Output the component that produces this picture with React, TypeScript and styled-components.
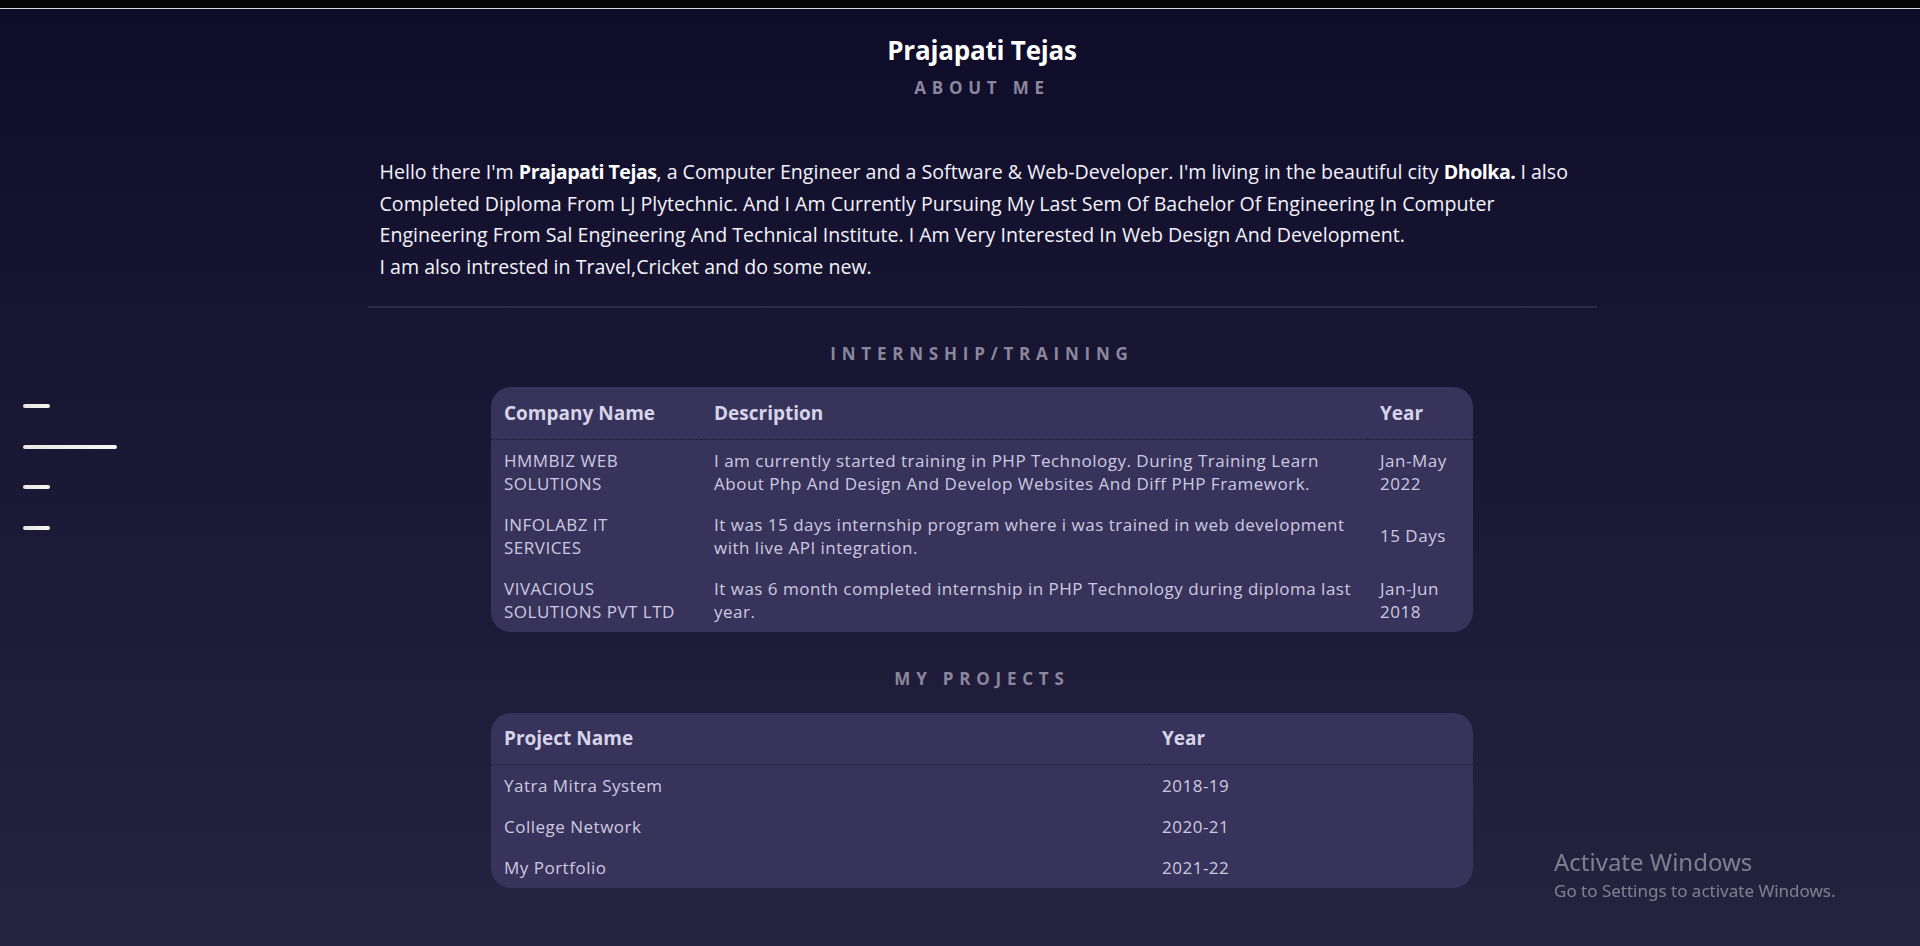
import React from "react";
import styled, { createGlobalStyle } from "styled-components";

const GlobalStyle = createGlobalStyle`
  html, body {
    margin: 0;
    padding: 0;
  }
  body {
    background: #0f0d2a;
    font-family: "Open Sans", sans-serif;
  }
  * { box-sizing: border-box; }
`;

const Page = styled.div`
  min-height: 946px;
  display: flex;
  flex-direction: column;
  background: linear-gradient(180deg, #0e0c29 0%, #171532 35%, #1e1c39 70%, #25233f 100%);
`;

const TopStrip = styled.div`
  height: 9px;
  background: #050505;
  border-bottom: 1px solid #d9d9d9;
  flex-shrink: 0;
`;

const Main = styled.main`
  display: flex;
  flex-direction: column;
  align-items: center;
  padding: 26px 0 40px 44px;
`;

const Name = styled.h1`
  margin: 0;
  font-family: "Open Sans", sans-serif;
  font-weight: 700;
  font-size: 26px;
  line-height: 30px;
  letter-spacing: -0.2px;
  color: #ffffff;
`;

const SectionTitle = styled.h2<{ $gapTop: number; $gapBottom: number }>`
  margin: ${(p) => p.$gapTop}px 0 ${(p) => p.$gapBottom}px;
  font-family: "Open Sans", sans-serif;
  font-weight: 700;
  font-size: 17px;
  line-height: 22px;
  letter-spacing: 0.34em;
  color: #8a879d;
  text-transform: uppercase;
`;

const AboutBlock = styled.section`
  width: 1229px;
  padding: 1px 12px 24px;
  border-bottom: 2px solid #2c2949;
`;

const AboutText = styled.p`
  margin: 0;
  font-family: "Open Sans", sans-serif;
  font-size: 19.6px;
  line-height: 31.5px;
  color: #f4f2fa;
  white-space: nowrap;

  strong {
    font-weight: 700;
    letter-spacing: -0.5px;
    color: #ffffff;
  }
`;

const TableCard = styled.div`
  width: 982px;
  background: #37335a;
  border-radius: 20px;
  overflow: hidden;
`;

const Table = styled.table`
  width: 100%;
  border-collapse: collapse;
  table-layout: fixed;
  font-family: "Open Sans", sans-serif;
`;

const HeadCell = styled.th`
  height: 52px;
  padding: 0 13px;
  text-align: left;
  vertical-align: middle;
  font-size: 19px;
  font-weight: 700;
  color: #d7d4e9;
  border-bottom: 1px dotted #1e1b38;
`;

const Cell = styled.td`
  padding: 9px 13px;
  vertical-align: middle;
  font-size: 17px;
  line-height: 23px;
  letter-spacing: 0.5px;
  font-weight: 400;
  color: #cdcae0;
  white-space: nowrap;
`;

const SideNav = styled.nav`
  position: fixed;
  left: 23px;
  top: 404px;
  display: flex;
  flex-direction: column;
  gap: 36.5px;
`;

const NavLine = styled.span<{ $wide?: boolean }>`
  display: block;
  width: ${(p) => (p.$wide ? 94 : 27)}px;
  height: 4px;
  border-radius: 2px;
  background: linear-gradient(90deg, #e9e6e2, #f7f5f2);
`;

const Watermark = styled.div`
  position: fixed;
  left: 1554px;
  top: 847px;
  font-family: "Noto Sans", sans-serif;
  color: rgba(255, 255, 255, 0.42);
  pointer-events: none;
`;

const WatermarkTitle = styled.div`
  font-size: 24px;
  line-height: 30px;
`;

const WatermarkSub = styled.div`
  margin-top: 2px;
  font-size: 17px;
  line-height: 24px;
`;

const internships = [
  {
    company: ["HMMBIZ WEB", "SOLUTIONS"],
    desc: [
      "I am currently started training in PHP Technology. During Training Learn",
      "About Php And Design And Develop Websites And Diff PHP Framework.",
    ],
    year: ["Jan-May", "2022"],
  },
  {
    company: ["INFOLABZ IT", "SERVICES"],
    desc: [
      "It was 15 days internship program where i was trained in web development",
      "with live API integration.",
    ],
    year: ["15 Days"],
  },
  {
    company: ["VIVACIOUS", "SOLUTIONS PVT LTD"],
    desc: [
      "It was 6 month completed internship in PHP Technology during diploma last",
      "year.",
    ],
    year: ["Jan-Jun", "2018"],
  },
];

const projects = [
  { name: "Yatra Mitra System", year: "2018-19" },
  { name: "College Network", year: "2020-21" },
  { name: "My Portfolio", year: "2021-22" },
];

function Lines({ lines }: { lines: string[] }) {
  return (
    <>
      {lines.map((l, i) => (
        <React.Fragment key={i}>
          {i > 0 && <br />}
          {l}
        </React.Fragment>
      ))}
    </>
  );
}

export default function App() {
  return (
    <>
      <GlobalStyle />
      <Page>
        <TopStrip />
        <Main>
          <Name>Prajapati Tejas</Name>
          <SectionTitle $gapTop={12} $gapBottom={56}>About Me</SectionTitle>
          <AboutBlock>
            <AboutText>
              Hello there I'm <strong>Prajapati Tejas</strong>, a Computer Engineer and a Software &amp; Web-Developer. I'm living in the beautiful city <strong>Dholka.</strong> I also
              <br />
              Completed Diploma From LJ Plytechnic. And I Am Currently Pursuing My Last Sem Of Bachelor Of Engineering In Computer
              <br />
              Engineering From Sal Engineering And Technical Institute. I Am Very Interested In Web Design And Development.
              <br />
              I am also intrested in Travel,Cricket and do some new.
            </AboutText>
          </AboutBlock>

          <SectionTitle $gapTop={35} $gapBottom={22}>Internship/Training</SectionTitle>
          <TableCard>
            <Table>
              <colgroup>
                <col style={{ width: 210 }} />
                <col style={{ width: 666 }} />
                <col style={{ width: 106 }} />
              </colgroup>
              <thead>
                <tr>
                  <HeadCell>Company Name</HeadCell>
                  <HeadCell>Description</HeadCell>
                  <HeadCell>Year</HeadCell>
                </tr>
              </thead>
              <tbody>
                {internships.map((r) => (
                  <tr key={r.company.join(" ")}>
                    <Cell><Lines lines={r.company} /></Cell>
                    <Cell><Lines lines={r.desc} /></Cell>
                    <Cell><Lines lines={r.year} /></Cell>
                  </tr>
                ))}
              </tbody>
            </Table>
          </TableCard>

          <SectionTitle $gapTop={36} $gapBottom={23}>My Projects</SectionTitle>
          <TableCard>
            <Table>
              <colgroup>
                <col style={{ width: 658 }} />
                <col style={{ width: 324 }} />
              </colgroup>
              <thead>
                <tr>
                  <HeadCell>Project Name</HeadCell>
                  <HeadCell>Year</HeadCell>
                </tr>
              </thead>
              <tbody>
                {projects.map((p) => (
                  <tr key={p.name}>
                    <Cell>{p.name}</Cell>
                    <Cell>{p.year}</Cell>
                  </tr>
                ))}
              </tbody>
            </Table>
          </TableCard>
        </Main>

        <SideNav>
          <NavLine />
          <NavLine $wide />
          <NavLine />
          <NavLine />
        </SideNav>

        <Watermark>
          <WatermarkTitle>Activate Windows</WatermarkTitle>
          <WatermarkSub>Go to Settings to activate Windows.</WatermarkSub>
        </Watermark>
      </Page>
    </>
  );
}
